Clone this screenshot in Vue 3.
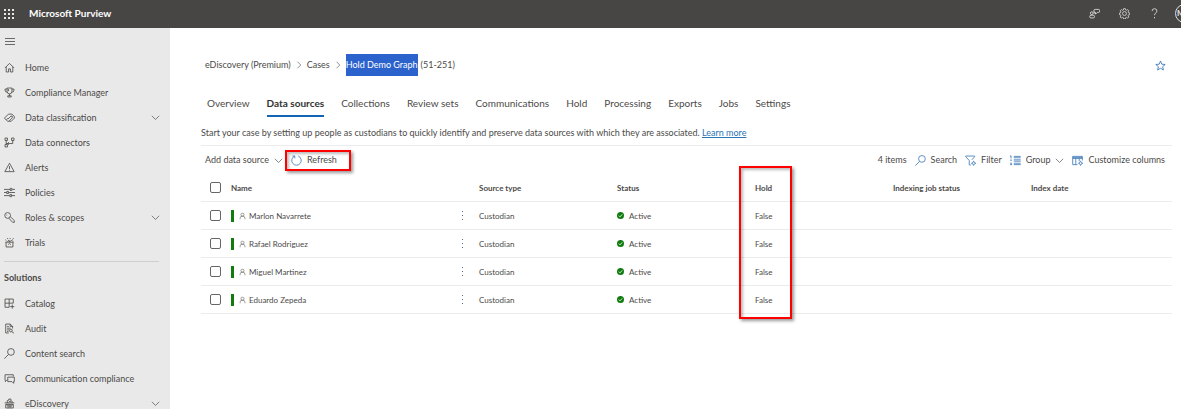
<script setup>
import { ref } from 'vue'

const icons = {
  home: 'M1.500 8.500 8 2l6.500 6.500M3.200 7v7.500h3.500V10h2.600v4.500h3.500V7',
  trophy: 'M4.500 1.500h7v5a3.500 3.500 0 0 1-7 0zM4.500 3H1.500v1.500a3 3 0 0 0 3.200 3M11.500 3h3v1.500a3 3 0 0 1-3.200 3M8 10v3M5.500 14.500v-1.700h5v1.700zM6.500 3v3',
  tag: 'M1 8.500 6.500 3h5l3.500 3.500v2.500l-4.500 4.500h-5L1 9.500zM5.500 10.500 10 6h2v2.500l-4.500 4.500M3.500 11l2-2',
  connectors: 'M1.500 1.500h3.500v3.500h-3.500zM1.500 11h3.500v3.500h-3.500zM11 1.500h3.500v3.500H11zM3.200 5v6M12.700 5v4.500H3.200M7 7.500 5 9.500l2 2',
  alert: 'M8 1.800 14.800 14H1.200zM8 6v4.500M8 11.500v1',
  policies: 'M0 3.500h9M12 3.500h4M9 2h2.500v3H9zM0 8h4M7 8h9M4 6.500h2.500v3H4zM0 12.500h8M11 12.500h5M8.500 11h2.500v3H8.500z',
  key: 'M9.500 5a4.200 4.200 0 1 1-8.400 0 4.200 4.200 0 0 1 8.400 0M9 6.500l6 6v2.500h-2.500L7 9M3.500 4.500h1',
  trials: 'M2 7.500h12M3 7.500v7h10v-7M5 7.500l2-3 2 3M8 7.500l3-3 2 2M2 4l1.500 1M5 1.500l.5 1.500M9 1.500 8.500 3M14 2l-2 1.500M6 11l2-1.500 2 1.500',
  catalog: 'M1.500 1.500h12v6M1.500 1.500v12h6M1.500 7.500h12M7.500 1.500v12M12 9.500v6M9 12.500h6',
  audit: 'M7 14.500H2.500v-13h6.500l3.500 3.500v3M9 1.500V5h3.500M4.500 5h2.500M4.500 7.500h5M4.500 10h3M4.500 12.300h2M12 11a2 2 0 1 1-4 0 2 2 0 0 1 4 0M11.500 12.500 14.500 15',
  search: 'M15 5.700a4.900 4.900 0 1 1-9.800 0 4.900 4.900 0 0 1 9.800 0M6.500 9.500.5 15.500',
  chat: 'M5 10.500H4l-2 2v-2h-.5v-8h12V5M5.500 6h9.500v6.500h-1V15l-2.500-2.500h-6z',
  ediscovery: 'M1 7h14M2.500 9h11v5.500h-11zM5 7l-.5-3 2.500-1V1.500h3V4l2 1-.5 2M4.500 11.500h7M5 13h6M7 5h3M3 10h10',
  chevron: 'M1.500 5 8 11.500 14.500 5',
  right: 'M5 1.500 11.500 8 5 14.500',
  star: 'M8 1.500l1.900 4.600 4.900.4-3.700 3.200 1.100 4.800L8 12l-4.200 2.500 1.100-4.800L1.200 6.500l4.900-.4z',
  refresh: 'M5 1.700A6.900 6.900 0 1 0 10.500 1.500M5.500 5V1.500H2',
  filter: 'M8.500 14.500H6.200V8L1 2.500V1.500h13v1L10 7M14.500 12a2 2 0 1 1-4 0 2 2 0 0 1 4 0M12.500 8.500V10M12.500 14v1.500M9 12h1.500M14.500 12H16',
  group: 'M1.500 1v4M0 2l1.500-1M0 7.500h3M0 12h3M0 14h3M5.500 2h10M5.500 4h10M5.500 7h10M5.500 9h10M5.500 12h10M5.500 14h10',
  columns: 'M8 14H1V2h14v6M1 5h14M1 3.500h14M5.500 5v9M10.500 5v4M14.500 12a2 2 0 1 1-4 0 2 2 0 0 1 4 0M12.500 8.500V10M12.500 14v1.500M9 12h1.500M14.500 12H16',
  person: 'M11.500 5a3.500 3.500 0 1 1-7 0 3.500 3.500 0 0 1 7 0M2.500 15.500V13a4.500 4.500 0 0 1 4.500-4.500h2a4.500 4.500 0 0 1 4.500 4.500v2.500',
  community: 'M6 7.500a2 2 0 1 1-4 0 2 2 0 0 1 4 0M1 12.500a2 2 0 0 1 2-2h3a2 2 0 0 1 0 4H3a2 2 0 0 1-2-2M9 2h4.500a2 2 0 0 1 0 4.500H12L9.500 9V6.500a2.200 2.200 0 0 1-.5-4.500M7.500 5.500v3',
  gear: 'M6.700 1h2.600l.4 2 1.500.6 1.700-1.100 1.800 1.800-1.200 1.700.7 1.500 1.900.3v2.400l-1.900.4-.7 1.500 1.200 1.700-1.800 1.800-1.700-1.200-1.500.6-.4 2H6.700l-.4-2-1.500-.6-1.700 1.200-1.800-1.800 1.200-1.700-.6-1.500-1.900-.4V7.800l1.900-.3.6-1.500-1.200-1.700 1.800-1.800 1.700 1.100L6.300 3zM11 8.500a3 3 0 1 1-6 0 3 3 0 0 1 6 0',
  help: 'M4.500 4.500a3.500 3.500 0 0 1 7 0c0 2.500-3.500 3-3.500 6M8 13v2',
}

const mainNav = [
  { label: 'Home', icon: 'home' },
  { label: 'Compliance Manager', icon: 'trophy' },
  { label: 'Data classification', icon: 'tag', expand: true },
  { label: 'Data connectors', icon: 'connectors' },
  { label: 'Alerts', icon: 'alert' },
  { label: 'Policies', icon: 'policies' },
  { label: 'Roles & scopes', icon: 'key', expand: true },
  { label: 'Trials', icon: 'trials' },
]
const solutions = [
  { label: 'Catalog', icon: 'catalog' },
  { label: 'Audit', icon: 'audit' },
  { label: 'Content search', icon: 'search' },
  { label: 'Communication compliance', icon: 'chat' },
  { label: 'eDiscovery', icon: 'ediscovery', expand: true },
]
const tabs = ['Overview', 'Data sources', 'Collections', 'Review sets', 'Communications', 'Hold', 'Processing', 'Exports', 'Jobs', 'Settings']
const activeTab = ref('Data sources')
const people = ['Marlon Navarrete', 'Rafael Rodriguez', 'Miguel Martinez', 'Eduardo Zepeda']
const selected = ref([])
function toggleAll(e) {
  selected.value = e.target.checked ? [...people] : []
}
</script>

<template>
  <div class="page">
    <header class="topbar">
      <button class="waffle" aria-label="App launcher"><i v-for="n in 9" :key="n"></i></button>
      <span class="brand">Microsoft Purview</span>
      <div class="top-actions">
        <button aria-label="Community"><svg class="icon" viewBox="0 0 16 16"><path :d="icons.community" /></svg></button>
        <button aria-label="Settings"><svg class="icon gear" viewBox="0 0 16 17"><path :d="icons.gear" /></svg></button>
        <button aria-label="Help"><svg class="icon" viewBox="0 0 16 16"><path :d="icons.help" /></svg></button>
        <button class="avatar" aria-label="Account">M</button>
      </div>
    </header>

    <div class="body">
      <nav class="sidebar">
        <button class="burger" aria-label="Collapse navigation"><i></i><i></i><i></i></button>
        <a v-for="item in mainNav" :key="item.label" href="#" class="nav-item">
          <svg class="icon" viewBox="0 0 16 16"><path :d="icons[item.icon]" /></svg>
          <span>{{ item.label }}</span>
          <svg v-if="item.expand" class="icon chev" viewBox="0 0 16 16"><path :d="icons.chevron" /></svg>
        </a>
        <h2>Solutions</h2>
        <a v-for="item in solutions" :key="item.label" href="#" class="nav-item">
          <svg class="icon" viewBox="0 0 16 16"><path :d="icons[item.icon]" /></svg>
          <span>{{ item.label }}</span>
          <svg v-if="item.expand" class="icon chev" viewBox="0 0 16 16"><path :d="icons.chevron" /></svg>
        </a>
      </nav>

      <main>
        <div class="crumb-row">
          <nav class="crumbs" aria-label="Breadcrumb">
            <a href="#">eDiscovery (Premium)</a>
            <svg class="icon sep" viewBox="0 0 16 16"><path :d="icons.right" /></svg>
            <a href="#">Cases</a>
            <svg class="icon sep" viewBox="0 0 16 16"><path :d="icons.right" /></svg>
            <span class="case"><mark>Hold Demo Graph</mark><span>(51-251)</span></span>
          </nav>
          <button class="star" aria-label="Favorite"><svg class="icon" viewBox="0 0 16 16"><path :d="icons.star" /></svg></button>
        </div>

        <div class="tabs" role="tablist">
          <button v-for="t in tabs" :key="t" role="tab" :aria-selected="t === activeTab" :class="{ active: t === activeTab }" @click="activeTab = t">{{ t }}</button>
        </div>

        <p class="intro">Start your case by setting up people as custodians to quickly identify and preserve data sources with which they are associated. <a href="#">Learn more</a></p>

        <div class="toolbar">
          <button class="add">Add data source <svg class="icon chev" viewBox="0 0 16 16"><path :d="icons.chevron" /></svg></button>
          <button class="refresh"><svg class="icon blue" viewBox="0 0 16 16"><path :d="icons.refresh" /></svg>Refresh</button>
          <div class="tools">
            <span class="count">4 items</span>
            <button><svg class="icon blue" viewBox="0 0 16 16"><path :d="icons.search" /></svg>Search</button>
            <button><svg class="icon blue" viewBox="0 0 16 16"><path :d="icons.filter" /></svg>Filter</button>
            <button><svg class="icon blue" viewBox="0 0 16 16"><path :d="icons.group" /></svg>Group<svg class="icon chev" viewBox="0 0 16 16"><path :d="icons.chevron" /></svg></button>
            <button><svg class="icon blue" viewBox="0 0 16 16"><path :d="icons.columns" /></svg>Customize columns</button>
          </div>
        </div>

        <table>
          <colgroup>
            <col class="c-check" /><col class="c-name" /><col class="c-more" /><col class="c-std" /><col class="c-std" /><col class="c-std" /><col class="c-std" /><col />
          </colgroup>
          <thead>
            <tr>
              <th><input type="checkbox" aria-label="Select all" :checked="selected.length === people.length" @change="toggleAll" /></th>
              <th>Name</th>
              <th></th>
              <th>Source type</th>
              <th>Status</th>
              <th class="hold">Hold<i class="callout"></i></th>
              <th>Indexing job status</th>
              <th>Index date</th>
            </tr>
          </thead>
          <tbody>
            <tr v-for="p in people" :key="p">
              <td><input v-model="selected" type="checkbox" :value="p" :aria-label="'Select ' + p" /></td>
              <td><div class="person"><i class="bar"></i><svg class="icon" viewBox="0 0 16 16"><path :d="icons.person" /></svg><span>{{ p }}</span></div></td>
              <td><button class="more" :aria-label="'Actions for ' + p"><i></i><i></i><i></i></button></td>
              <td>Custodian</td>
              <td>
                <div class="status">
                  <svg class="ok" viewBox="0 0 14 14"><circle cx="7" cy="7" r="7" /><path d="M3.500 7.200 6 9.700l4.500-4.900" /></svg>
                  <span>Active</span>
                </div>
              </td>
              <td>False</td>
              <td></td>
              <td></td>
            </tr>
          </tbody>
        </table>
      </main>
    </div>
  </div>
</template>

<style>
body {
  overflow: hidden;
}
</style>

<style scoped>
.page {
  height: 100vh;
  display: flex;
  flex-direction: column;
  overflow: hidden;
  background: #fff;
  color: #4c4a48;
  font: 9px/12px Lato, "Open Sans", sans-serif;
}
button {
  border: 0;
  padding: 0;
  background: none;
  color: inherit;
  font: inherit;
  white-space: nowrap;
}
a {
  color: inherit;
  text-decoration: none;
}
.icon {
  width: 11px;
  height: 11px;
  flex: none;
  fill: none;
  stroke: currentColor;
  stroke-width: 1.2;
}
.icon.chev {
  width: 9px;
  height: 9px;
}
.icon.blue {
  color: #3f78b8;
}

.topbar {
  height: 28px;
  flex: none;
  display: flex;
  align-items: center;
  padding-left: 4px;
  background: #484644;
  color: #fff;
}
.waffle {
  display: grid;
  grid-template-columns: repeat(3, 2px);
  gap: 2px;
}
.waffle i {
  height: 2px;
  background: #e8e8e8;
}
.brand {
  margin-left: 15px;
  font-size: 10px;
  line-height: 14px;
  padding-bottom: 2px;
  font-weight: 700;
}
.top-actions {
  display: flex;
  align-items: center;
  gap: 19px;
  margin-left: auto;
  margin-right: -13px;
  padding-bottom: 2px;
  color: #e4e4e4;
}
.top-actions button {
  display: flex;
}
.top-actions .avatar {
  width: 19px;
  height: 19px;
  align-items: center;
  padding-left: 1px;
  margin-left: -4px;
  border: 1px solid #ddd;
  border-radius: 50%;
  font-size: 8px;
  font-weight: 700;
}

.body {
  flex: 1;
  min-height: 0;
  display: flex;
}
.sidebar {
  width: 170px;
  flex: none;
  overflow: hidden;
  background: #e9e9e9;
}
.burger {
  display: flex;
  flex-direction: column;
  gap: 2px;
  width: 10px;
  margin: 10px 5px;
}
.burger i {
  height: 1px;
  background: #6a6a6a;
}
.nav-item {
  display: flex;
  align-items: center;
  height: 25px;
  padding: 0 10px 0 4px;
}
.nav-item span {
  margin-left: 10px;
}
.nav-item .chev {
  margin-left: auto;
}
.sidebar h2 {
  margin: 6px 11px 7px 4px;
  padding-top: 10px;
  border-top: 1px solid #cfcfcf;
  font-size: 9px;
  line-height: 12px;
  font-weight: 700;
}

main {
  flex: 1;
  min-width: 0;
  padding: 26px 9px 0 31px;
}
.crumb-row {
  display: flex;
  align-items: center;
  justify-content: space-between;
  padding: 0 6px 0 4px;
}
.crumbs {
  display: flex;
  align-items: center;
  gap: 4px;
}
.crumbs .sep {
  width: 8px;
  height: 8px;
}
.case {
  display: flex;
  align-items: center;
  gap: 3px;
}
.case mark {
  line-height: 22px;
  background: #2b62cb;
  color: #fff;
}
.star {
  display: flex;
  color: #2f6fb5;
}
.tabs {
  display: flex;
  gap: 17px;
  margin-top: 16px;
  padding-left: 6px;
}
.tabs button {
  height: 25px;
  padding-bottom: 2px;
  border-bottom: 2px solid transparent;
  font-size: 10px;
}
.tabs .active {
  border-color: #1464b4;
  color: #323130;
  font-weight: 700;
}
.intro {
  margin: 10px 0 0;
  padding-bottom: 6px;
  border-bottom: 1px solid #ececec;
  white-space: nowrap;
}
.intro a {
  color: #2b74b5;
  text-decoration: underline;
}

.toolbar {
  display: flex;
  align-items: center;
  height: 28px;
  padding: 0 7px 0 4px;
}
.toolbar button {
  display: flex;
  align-items: center;
  gap: 5px;
}
.toolbar .refresh {
  width: 66px;
  height: 21px;
  margin-left: 2px;
  padding-left: 4px;
  border: 2px solid #f00;
  box-shadow: 2px 2px 3px #0006, inset 2px 2px 3px #0004;
}
.tools {
  display: flex;
  align-items: center;
  gap: 8px;
  margin-left: auto;
}

table {
  width: 100%;
  border-collapse: separate;
  border-spacing: 0;
  table-layout: fixed;
  font-size: 8px;
}
.c-check {
  width: 30px;
}
.c-name {
  width: 231px;
}
.c-more {
  width: 17px;
}
.c-std {
  width: 138px;
}
th,
td {
  height: 27px;
  padding: 0;
  border-bottom: 1px solid #ececec;
  text-align: left;
  vertical-align: middle;
  white-space: nowrap;
}
th {
  font-weight: 700;
}
input {
  display: block;
  appearance: none;
  width: 11px;
  height: 11px;
  margin: 0 0 0 9px;
  border: 1px solid #666;
  border-radius: 2px;
}
input:checked {
  background: #1464b4;
}
.person,
.status {
  display: flex;
  align-items: center;
}
.bar {
  width: 3px;
  height: 12px;
  margin-right: 5px;
  background: #107c10;
}
.person .icon {
  width: 7px;
  height: 8px;
  margin-right: 3px;
}
.ok {
  width: 7px;
  height: 7px;
  margin-right: 5px;
  fill: #107c10;
}
.ok path {
  fill: none;
  stroke: #fff;
  stroke-width: 1.6;
}
.more {
  display: grid;
  gap: 3px;
}
.more i {
  width: 1px;
  height: 1px;
  background: #4b6d91;
}
.hold {
  position: relative;
}
.callout {
  position: absolute;
  top: -8px;
  left: -16px;
  width: 49px;
  height: 149px;
  border: 2px solid #f00;
  box-shadow: 2px 2px 3px #0006, inset 2px 2px 3px #0004;
  pointer-events: none;
}
</style>
